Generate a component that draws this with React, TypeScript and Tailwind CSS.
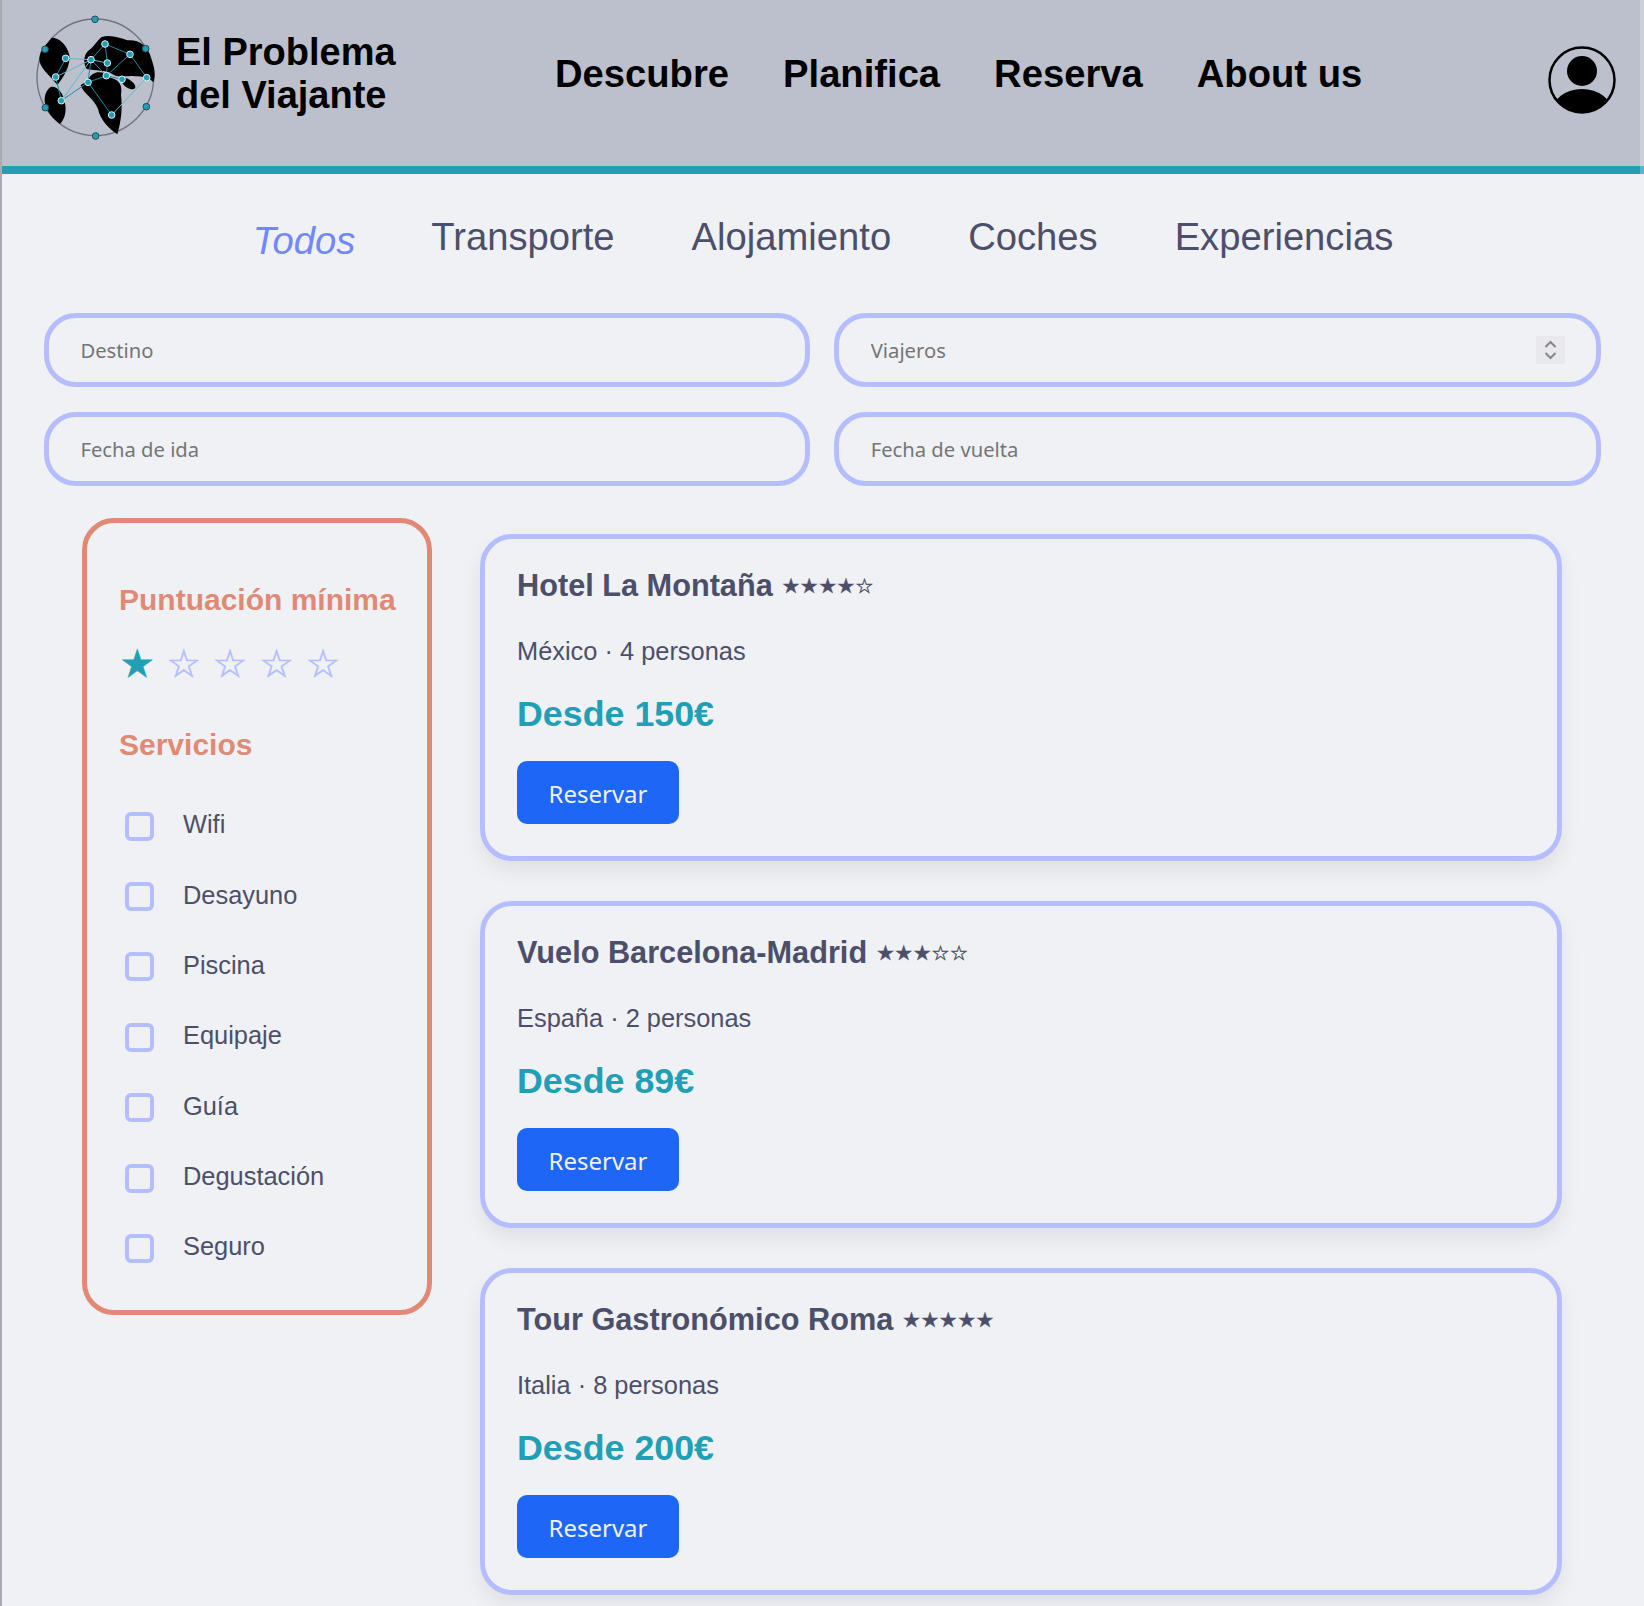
import React from 'react'

const services = ['Wifi', 'Desayuno', 'Piscina', 'Equipaje', 'Guía', 'Degustación', 'Seguro']

const offers = [
	{ title: 'Hotel La Montaña', stars: '★★★★☆', place: 'México · 4 personas', price: 'Desde 150€' },
	{ title: 'Vuelo Barcelona-Madrid', stars: '★★★☆☆', place: 'España · 2 personas', price: 'Desde 89€' },
	{ title: 'Tour Gastronómico Roma', stars: '★★★★★', place: 'Italia · 8 personas', price: 'Desde 200€' },
]

const outerNodes = [[225, 43], [75, 133], [377, 131], [379, 305], [76, 308], [227, 393]]
const innerNodes = [[255, 117], [330, 148], [137, 160], [213, 164], [262, 174], [107, 216], [259, 212], [306, 223], [380, 218], [204, 232], [124, 287], [275, 330]]
const darkEdges = [
	[255, 117, 330, 148], [255, 117, 213, 164], [255, 117, 262, 174], [330, 148, 259, 212], [330, 148, 380, 218],
	[137, 160, 107, 216], [213, 164, 204, 232], [259, 212, 204, 232], [262, 174, 259, 212], [259, 212, 306, 223],
	[107, 216, 124, 287], [204, 232, 275, 330], [204, 232, 124, 287], [213, 164, 259, 212],
]
const lightEdges = [
	[137, 160, 213, 164], [213, 164, 107, 216], [213, 164, 124, 287], [275, 330, 380, 218], [213, 164, 262, 174],
]

const Logo = () => (
	<svg width="150" height="140" viewBox="0 0 450 420" className="shrink-0">
		<circle cx="226" cy="217" r="175" fill="none" stroke="#6f7280" strokeWidth="4" />
		<path fill="#000" d="M95,98 C118,98 142,120 148,150 C152,182 132,215 112,240 C90,212 56,188 58,160 C60,130 80,120 95,98Z" />
		<path fill="#000" d="M92,246 C108,240 130,262 134,290 C142,320 132,345 120,357 C100,342 78,318 74,290 C73,270 80,254 92,246Z" />
		<path fill="#000" d="M245,96 C270,88 300,98 322,106 C352,102 384,118 394,162 C404,190 408,210 400,232 C388,218 368,214 345,214 C322,210 300,222 278,208 C258,194 225,198 200,192 C188,172 192,150 204,138 C220,128 230,108 245,96Z" />
		<path fill="#000" d="M203,228 C216,194 250,196 272,218 C298,224 308,240 303,270 C308,310 303,350 292,388 C266,372 240,342 234,312 C224,282 186,262 182,240Z" />
		<ellipse cx="325" cy="236" rx="24" ry="12" transform="rotate(35 325 236)" fill="#000" />
		{darkEdges.map((e, i) => (
			<line key={i} x1={e[0]} y1={e[1]} x2={e[2]} y2={e[3]} stroke="#1b8ba0" strokeWidth="3" />
		))}
		{lightEdges.map((e, i) => (
			<line key={i} x1={e[0]} y1={e[1]} x2={e[2]} y2={e[3]} stroke="#5fb8ca" strokeWidth="3" />
		))}
		{outerNodes.map((n, i) => (
			<circle key={i} cx={n[0]} cy={n[1]} r="10" fill="#209fb5" stroke="#2c4a55" strokeWidth="3" />
		))}
		{innerNodes.map((n, i) => (
			<circle key={i} cx={n[0]} cy={n[1]} r="10" fill="#209fb5" stroke="#e6eef2" strokeWidth="3" />
		))}
	</svg>
)

const Avatar = () => (
	<svg width="68" height="68" viewBox="0 0 68 68" className="mt-[9px] shrink-0">
		<defs>
			<clipPath id="avatar-clip">
				<circle cx="34" cy="34" r="32" />
			</clipPath>
		</defs>
		<circle cx="34" cy="34" r="32.5" fill="none" stroke="#000" strokeWidth="2.5" />
		<circle cx="34" cy="25" r="15" fill="#000" />
		<ellipse cx="34" cy="66" rx="30" ry="23" fill="#000" clipPath="url(#avatar-clip)" />
	</svg>
)

const Field = ({ placeholder, spinner }: { placeholder: string; spinner?: boolean }) => (
	<div className="relative">
		<input
			placeholder={placeholder}
			className="box-border block w-full h-[74px] border-[5px] border-[#b4befe] rounded-[32px] bg-transparent pl-[31.5px] pr-4 font-['Noto_Sans'] text-[20.2px] text-[#4c4f69] placeholder:text-[#757575] outline-none"
		/>
		{spinner && (
			<div className="absolute right-[36px] top-[23px] w-[29px] h-[28px] bg-[#e8e8ed] flex items-center justify-center">
				<svg width="13" height="20" viewBox="0 0 13 20" fill="none" stroke="#85858f" strokeWidth="2">
					<path d="M1.5 7 L6.5 2 L11.5 7" />
					<path d="M1.5 13 L6.5 18 L11.5 13" />
				</svg>
			</div>
		)}
	</div>
)

const App = () => {
	return (
		<div className="relative w-[1644px] h-[1606px] overflow-hidden bg-[#eff1f5] border-l-2 border-[#a9abb3] font-['Liberation_Sans',sans-serif]">
			<header className="h-[174px] box-border bg-[#bcc0cc] border-b-8 border-[#209fb5] flex items-center pb-[16px] pl-[18px] pr-[28px] text-black">
				<Logo />
				<h1 className="ml-[6px] mt-[-2px] w-[379px] font-bold text-[38px] leading-[43px]">
					El Problema<br />del Viajante
				</h1>
				<nav className="flex gap-[54px] font-bold text-[38.2px] leading-[44px] mt-[-2px]">
					<a>Descubre</a>
					<a>Planifica</a>
					<a>Reserva</a>
					<a>About us</a>
				</nav>
				<div className="ml-auto">
					<Avatar />
				</div>
			</header>
			<div className="absolute top-0 right-0 w-[4px] h-[174px] bg-white/25" />

			<div className="flex justify-center items-start gap-[77px] h-[50px] mt-[38px] text-[38.2px] leading-[50px] text-[#4c4f69]">
				<span className="italic text-[#7287fd] mt-[4px] mr-[-1px]">Todos</span>
				<span>Transporte</span>
				<span>Alojamiento</span>
				<span>Coches</span>
				<span>Experiencias</span>
			</div>

			<div className="grid grid-cols-2 gap-x-[24px] gap-y-[25px] mt-[51px] ml-[42px] mr-[43.5px]">
				<Field placeholder="Destino" />
				<Field placeholder="Viajeros" spinner />
				<Field placeholder="Fecha de ida" />
				<Field placeholder="Fecha de vuelta" />
			</div>

			<div className="flex items-start gap-[48px] mt-[32px] ml-[80px]">
				<aside className="box-border w-[350px] h-[797px] border-[5px] border-[#e08a75] rounded-[32px] pt-[59px] pl-[32px]">
					<h2 className="font-bold text-[30px] leading-[36px] text-[#e08a75]">Puntuación mínima</h2>
					<div className="flex gap-[12px] mt-[23px] ml-[1px] text-[38.4px] leading-[46px] font-['DejaVu_Sans',sans-serif] text-[#b4befe] [-webkit-text-stroke:0.6px_#b4befe]">
						<span className="text-[#209fb5] [-webkit-text-stroke:0.6px_#209fb5]">★</span>
						<span>☆</span>
						<span>☆</span>
						<span>☆</span>
						<span>☆</span>
					</div>
					<h2 className="font-bold text-[30px] leading-[36px] text-[#e08a75] mt-[40px]">Servicios</h2>
					<ul className="mt-[26px] flex flex-col">
						{services.map((s) => (
							<li key={s} className="flex items-center h-[70.4px] text-[25.4px] text-[#4c4f69]">
								<span className="box-border ml-[6px] w-[29px] h-[29px] border-4 border-[#b4befe] rounded-[6px] mt-[4px]" />
								<span className="ml-[29px]">{s}</span>
							</li>
						))}
					</ul>
				</aside>

				<main className="w-[1082px] mt-[16px] flex flex-col gap-[40px]">
					{offers.map((o) => (
						<article
							key={o.title}
							className="box-border h-[327px] border-[5px] border-[#b4befe] rounded-[32px] pt-[27px] pl-[32px] shadow-[0_10px_20px_rgba(0,0,0,0.07)]"
						>
							<div className="flex items-center gap-[9px] h-[40px] text-[#4c4f69]">
								<h3 className="font-bold text-[30.7px] leading-[40px]">{o.title}</h3>
								<span className="font-['DejaVu_Sans',sans-serif] text-[20.5px] [-webkit-text-stroke:0.4px_#4c4f69]">{o.stars}</span>
							</div>
							<p className="mt-[29px] text-[25.4px] leading-[32px] text-[#4c4f69]">{o.place}</p>
							<p className="mt-[25px] font-bold text-[35.8px] leading-[44px] text-[#209fb5]">{o.price}</p>
							<button className="block mt-[25px] w-[162px] h-[63px] pt-[2px] bg-[#1e66f5] rounded-[10px] font-['Noto_Sans'] text-[24px] text-[#eff1f5]">
								Reservar
							</button>
						</article>
					))}
				</main>
			</div>
		</div>
	)
}

export default App
